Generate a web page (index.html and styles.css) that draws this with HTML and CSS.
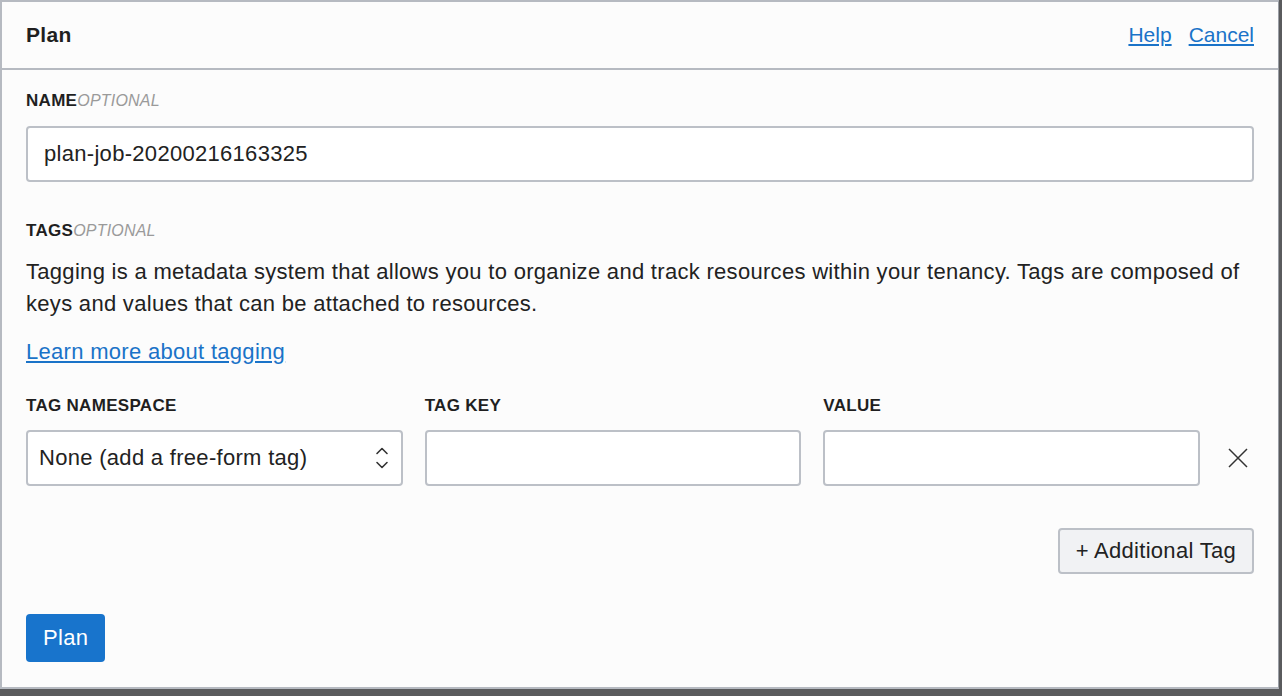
FILE: index.html
```html
<!DOCTYPE html>
<html>
<head>
<meta charset="utf-8">
<link rel="stylesheet" href="styles.css">
</head>
<body>
<div class="panel">
  <header class="head">
    <h1 class="title">Plan</h1>
    <nav class="head-links">
      <a class="link" href="#">Help</a>
      <a class="link" href="#">Cancel</a>
    </nav>
  </header>
  <main class="body">
    <div class="label"><span class="label-main">NAME</span><span class="opt">OPTIONAL</span></div>
    <div class="input name-input">plan-job-20200216163325</div>

    <div class="label tags-label"><span class="label-main">TAGS</span><span class="opt">OPTIONAL</span></div>
    <p class="desc">Tagging is a metadata system that allows you to organize and track resources within your tenancy. Tags are composed of keys and values that can be attached to resources.</p>
    <a class="link learn" href="#">Learn more about tagging</a>

    <div class="tag-grid">
      <div class="col-head">TAG NAMESPACE</div>
      <div class="col-head">TAG KEY</div>
      <div class="col-head">VALUE</div>
      <div></div>
      <div class="input select">
        <span>None (add a free-form tag)</span>
        <svg class="chev" width="14" height="28" viewBox="0 0 14 28"><path d="M2 9.5 L7 4.5 L12 9.5" fill="none" stroke="#333" stroke-width="1.6" stroke-linecap="round" stroke-linejoin="round"/><path d="M2 18.5 L7 23.5 L12 18.5" fill="none" stroke="#333" stroke-width="1.6" stroke-linecap="round" stroke-linejoin="round"/></svg>
      </div>
      <div class="input"></div>
      <div class="input"></div>
      <div class="remove">
        <svg width="20" height="20" viewBox="0 0 20 20"><path d="M1 1 L19 19 M19 1 L1 19" stroke="#333" stroke-width="1.5" fill="none"/></svg>
      </div>
    </div>

    <div class="add-row">
      <button class="btn-secondary">+ Additional Tag</button>
    </div>

    <button class="btn-primary">Plan</button>
  </main>
</div>
</body>
</html>
```

FILE: styles.css
```css
html, body {
  margin: 0;
  padding: 0;
}
body {
  background: #5a5b5d;
  width: 1282px;
  height: 696px;
  overflow: hidden;
  font-family: "Liberation Sans", Arial, sans-serif;
  color: #222;
}
.panel {
  box-sizing: border-box;
  width: 1279px;
  height: 689px;
  background: #fcfcfc;
  border-top: 2px solid #b6bac1;
  border-left: 2px solid #b6bac1;
  border-right: 1px solid #9a9ea5;
  border-bottom: 2px solid #b6bac1;
  display: flex;
  flex-direction: column;
}
.head {
  height: 66px;
  border-bottom: 2px solid #b6bac1;
  display: flex;
  align-items: center;
  justify-content: space-between;
  padding: 0 24px;
}
.title {
  margin: 0;
  font-size: 21px;
  letter-spacing: 0.3px;
  font-weight: bold;
  color: #1f1f1f;
}
.head-links {
  display: flex;
  gap: 17px;
  font-size: 21px;
}
.link {
  color: #1a73c8;
  text-decoration: underline;
}
.body {
  padding: 21px 24px 0 24px;
  display: flex;
  flex-direction: column;
  align-items: flex-start;
}
.label {
  line-height: 20px;
  margin-bottom: 15px;
}
.label-main {
  font-size: 17px;
  letter-spacing: 0.3px;
  font-weight: bold;
  color: #1f1f1f;
}
.opt {
  font-size: 16px;
  letter-spacing: 0.2px;
  font-style: italic;
  color: #9a9a9a;
  font-weight: normal;
}
.input {
  box-sizing: border-box;
  height: 56px;
  background: #fff;
  border: 2px solid #bcc0c7;
  border-radius: 4px;
  display: flex;
  align-items: center;
  font-size: 22px;
  letter-spacing: 0.3px;
  color: #222;
}
.name-input {
  align-self: stretch;
  padding-left: 16px;
}
.tags-label {
  margin-top: 39px;
}
.desc {
  margin: 0;
  font-size: 22px;
  letter-spacing: 0.3px;
  line-height: 32px;
  color: #222;
}
.learn {
  margin-top: 16px;
  font-size: 22px;
  letter-spacing: 0.3px;
  line-height: 32px;
}
.tag-grid {
  margin-top: 28px;
  align-self: stretch;
  display: grid;
  grid-template-columns: 1fr 1fr 1fr 32px;
  column-gap: 22px;
  row-gap: 14px;
}
.col-head {
  font-size: 17px;
  letter-spacing: 0.3px;
  line-height: 20px;
  font-weight: bold;
  color: #1f1f1f;
}
.select {
  padding: 0 12px 0 11px;
  justify-content: space-between;
}
.chev {
  display: block;
}
.remove {
  display: flex;
  align-items: center;
  justify-content: center;
}
.add-row {
  align-self: stretch;
  display: flex;
  justify-content: flex-end;
  margin-top: 42px;
}
.btn-secondary {
  box-sizing: border-box;
  height: 46px;
  padding: 0 16px;
  background: #f1f2f4;
  border: 2px solid #bcc0c7;
  border-radius: 4px;
  font-family: "Liberation Sans", Arial, sans-serif;
  font-size: 22px;
  letter-spacing: 0.3px;
  color: #222;
}
.btn-primary {
  box-sizing: border-box;
  margin-top: 40px;
  height: 48px;
  padding: 0 17px;
  background: #1874cc;
  border: none;
  border-radius: 4px;
  font-family: "Liberation Sans", Arial, sans-serif;
  font-size: 22px;
  letter-spacing: 0.3px;
  color: #fff;
}
```
